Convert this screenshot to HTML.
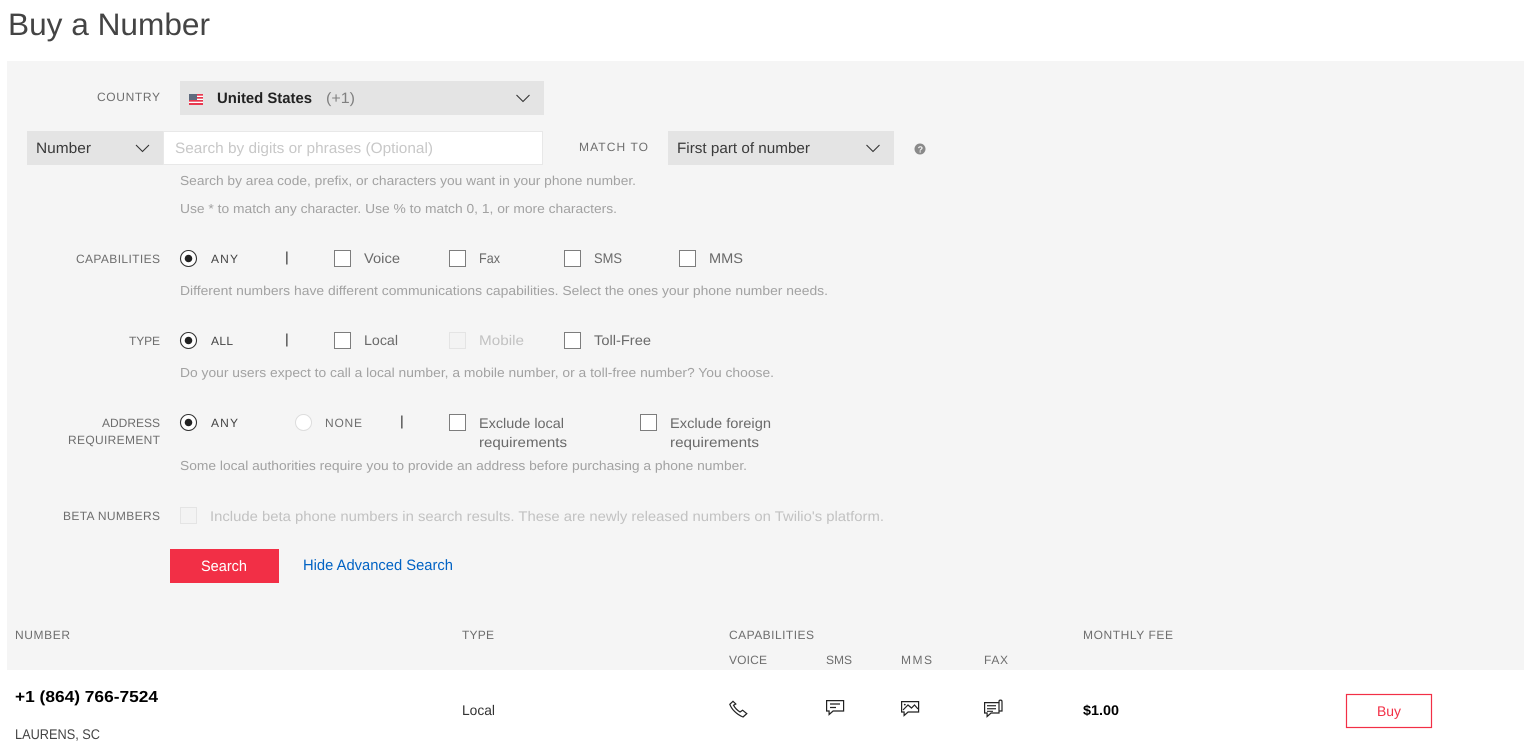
<!DOCTYPE html>
<html lang="en">
<head>
<meta charset="utf-8">
<title>Buy a Number</title>
<style>
html,body{margin:0;padding:0;background:#fff;width:1532px;height:752px;overflow:hidden}
svg{display:block;position:absolute;left:0;top:0}
text{font-family:"Liberation Sans",sans-serif;white-space:pre;text-rendering:geometricPrecision}
.lab{font-size:12px;fill:#6e6e6e}
.opt{font-size:14px;fill:#6a6a6a}
.cap{font-size:12px;fill:#444}
.sel{font-size:15px;fill:#3a3a3a}
.hint{font-size:13px;fill:#a2a2a2}
.dis{font-size:14px;fill:#c2c2c2}
.cb{fill:#fff;stroke:#7d7d7d;stroke-width:1}
.cbd{fill:#f3f3f3;stroke:#e4e4e4;stroke-width:1}
.chev{fill:none;stroke:#333;stroke-width:1.1}
.ic{fill:none;stroke:#222;stroke-width:1.2}
</style>
</head>
<body>
<svg width="1532" height="752" viewBox="0 0 1532 752" xmlns="http://www.w3.org/2000/svg">
<text x="8" y="35" font-size="31" fill="#444" textLength="202" lengthAdjust="spacingAndGlyphs">Buy a Number</text>
<rect x="7" y="61" width="1517" height="609" fill="#f5f5f5"/>

<!-- Country -->
<text class="lab" x="97" y="101" textLength="63" lengthAdjust="spacing">COUNTRY</text>
<rect x="180" y="81" width="364" height="34" fill="#e4e4e4"/>
<g>
<rect x="189" y="94" width="14" height="11" fill="#fff"/>
<rect x="189" y="94" width="14" height="1.700" fill="#e8384f"/>
<rect x="189" y="97" width="14" height="1.700" fill="#e8384f"/>
<rect x="189" y="100" width="14" height="1.700" fill="#e8384f"/>
<rect x="189" y="103" width="14" height="2" fill="#e8384f"/>
<rect x="189" y="94" width="8" height="6" fill="#5f6b7e"/>
</g>
<text x="217" y="103" font-size="15" font-weight="700" fill="#222" textLength="95" lengthAdjust="spacingAndGlyphs">United States</text>
<text x="326" y="103" font-size="15" fill="#808080" textLength="29" lengthAdjust="spacingAndGlyphs">(+1)</text>
<path class="chev" d="M516.500 95l6.500 6.500 6.500-6.500"/>

<!-- Number row -->
<rect x="27" y="131" width="136" height="34" fill="#e4e4e4"/>
<text class="sel" x="36" y="153" textLength="55" lengthAdjust="spacingAndGlyphs">Number</text>
<path class="chev" d="M136 145l6.500 6.500 6.500-6.500"/>
<rect x="163.500" y="131.500" width="379" height="33" fill="#fff" stroke="#e8e8e8"/>
<text x="175" y="153" font-size="15" fill="#c8c8c8" textLength="258" lengthAdjust="spacingAndGlyphs">Search by digits or phrases (Optional)</text>
<text class="lab" x="579" y="151" textLength="69" lengthAdjust="spacing">MATCH TO</text>
<rect x="668" y="131" width="226" height="34" fill="#e4e4e4"/>
<text class="sel" x="677" y="153" textLength="133" lengthAdjust="spacingAndGlyphs">First part of number</text>
<path class="chev" d="M866.500 145l6.500 6.500 6.500-6.500"/>
<circle cx="920" cy="149" r="5.500" fill="#8a8a8a"/>
<text x="917.600" y="152.500" font-size="9" font-weight="700" fill="#f5f5f5">?</text>
<text class="hint" x="180" y="185" textLength="456" lengthAdjust="spacingAndGlyphs">Search by area code, prefix, or characters you want in your phone number.</text>
<text class="hint" x="180" y="213" textLength="437" lengthAdjust="spacingAndGlyphs">Use * to match any character. Use % to match 0, 1, or more characters.</text>

<!-- Capabilities -->
<text class="lab" x="76" y="263" textLength="84" lengthAdjust="spacing">CAPABILITIES</text>
<circle cx="188.500" cy="258.500" r="8" fill="#fff" stroke="#333" stroke-width="1.100"/>
<circle cx="188.500" cy="258.500" r="3.800" fill="#222"/>
<text class="cap" x="211" y="263" textLength="27" lengthAdjust="spacing">ANY</text>
<rect x="286.200" y="251.500" width="1.300" height="13" fill="#444"/>
<rect class="cb" x="334.500" y="250.500" width="16" height="16"/>
<text class="opt" x="364" y="263" textLength="36" lengthAdjust="spacingAndGlyphs">Voice</text>
<rect class="cb" x="449.500" y="250.500" width="16" height="16"/>
<text class="opt" x="479" y="263" textLength="21" lengthAdjust="spacingAndGlyphs">Fax</text>
<rect class="cb" x="564.500" y="250.500" width="16" height="16"/>
<text class="opt" x="594" y="263" textLength="28" lengthAdjust="spacingAndGlyphs">SMS</text>
<rect class="cb" x="679.500" y="250.500" width="16" height="16"/>
<text class="opt" x="709" y="263" textLength="34" lengthAdjust="spacingAndGlyphs">MMS</text>
<text class="hint" x="180" y="295" textLength="648" lengthAdjust="spacingAndGlyphs">Different numbers have different communications capabilities. Select the ones your phone number needs.</text>

<!-- Type -->
<text class="lab" x="129" y="345" textLength="31" lengthAdjust="spacing">TYPE</text>
<circle cx="188.500" cy="340.500" r="8" fill="#fff" stroke="#333" stroke-width="1.100"/>
<circle cx="188.500" cy="340.500" r="3.800" fill="#222"/>
<text class="cap" x="211" y="345" textLength="22" lengthAdjust="spacing">ALL</text>
<rect x="286.200" y="333.500" width="1.300" height="13" fill="#444"/>
<rect class="cb" x="334.500" y="332.500" width="16" height="16"/>
<text class="opt" x="364" y="345" textLength="34" lengthAdjust="spacingAndGlyphs">Local</text>
<rect class="cbd" x="449.500" y="332.500" width="16" height="16"/>
<text class="dis" x="479" y="345" textLength="45" lengthAdjust="spacingAndGlyphs">Mobile</text>
<rect class="cb" x="564.500" y="332.500" width="16" height="16"/>
<text class="opt" x="594" y="345" textLength="57" lengthAdjust="spacingAndGlyphs">Toll-Free</text>
<text class="hint" x="180" y="377" textLength="594" lengthAdjust="spacingAndGlyphs">Do your users expect to call a local number, a mobile number, or a toll-free number? You choose.</text>

<!-- Address -->
<text class="lab" x="102" y="427" textLength="58" lengthAdjust="spacing">ADDRESS</text>
<text class="lab" x="68" y="444" textLength="92" lengthAdjust="spacing">REQUIREMENT</text>
<circle cx="188.500" cy="422.500" r="8" fill="#fff" stroke="#333" stroke-width="1.100"/>
<circle cx="188.500" cy="422.500" r="3.800" fill="#222"/>
<text class="cap" x="211" y="427" textLength="27" lengthAdjust="spacing">ANY</text>
<circle cx="303.500" cy="422.500" r="8" fill="#fff" stroke="#ddd"/>
<text class="lab" x="325" y="427" textLength="37" lengthAdjust="spacing">NONE</text>
<rect x="401.200" y="415.500" width="1.300" height="13" fill="#444"/>
<rect class="cb" x="449.500" y="414.500" width="16" height="16"/>
<text class="opt" x="479" y="428" textLength="85" lengthAdjust="spacingAndGlyphs">Exclude local</text>
<text class="opt" x="479" y="447" textLength="88" lengthAdjust="spacingAndGlyphs">requirements</text>
<rect class="cb" x="640.500" y="414.500" width="16" height="16"/>
<text class="opt" x="670" y="428" textLength="101" lengthAdjust="spacingAndGlyphs">Exclude foreign</text>
<text class="opt" x="670" y="447" textLength="89" lengthAdjust="spacingAndGlyphs">requirements</text>
<text class="hint" x="180" y="470" textLength="567" lengthAdjust="spacingAndGlyphs">Some local authorities require you to provide an address before purchasing a phone number.</text>

<!-- Beta -->
<text class="lab" x="63" y="520" textLength="97" lengthAdjust="spacing">BETA NUMBERS</text>
<rect class="cbd" x="180.500" y="507.500" width="16" height="16"/>
<text class="dis" x="210" y="521" textLength="674" lengthAdjust="spacingAndGlyphs">Include beta phone numbers in search results. These are newly released numbers on Twilio's platform.</text>

<!-- Actions -->
<rect x="170" y="549" width="109" height="34" fill="#f22f46"/>
<text x="201" y="571" font-size="15" fill="#fff" textLength="46" lengthAdjust="spacingAndGlyphs">Search</text>
<text x="303" y="570" font-size="15" fill="#0263c4" textLength="150" lengthAdjust="spacingAndGlyphs">Hide Advanced Search</text>

<!-- Table head -->
<text class="lab" x="15" y="639" textLength="55" lengthAdjust="spacing">NUMBER</text>
<text class="lab" x="462" y="639" textLength="32" lengthAdjust="spacing">TYPE</text>
<text class="lab" x="729" y="639" textLength="85" lengthAdjust="spacing">CAPABILITIES</text>
<text class="lab" x="1083" y="639" textLength="90" lengthAdjust="spacing">MONTHLY FEE</text>
<text class="lab" x="729" y="664" textLength="38" lengthAdjust="spacing">VOICE</text>
<text class="lab" x="826" y="664" textLength="26" lengthAdjust="spacing">SMS</text>
<text class="lab" x="901" y="664" textLength="31" lengthAdjust="spacing">MMS</text>
<text class="lab" x="984" y="664" textLength="24" lengthAdjust="spacing">FAX</text>

<!-- Row -->
<text x="15" y="702" font-size="16" font-weight="700" fill="#000" textLength="143" lengthAdjust="spacingAndGlyphs">+1 (864) 766-7524</text>
<text x="15" y="739" font-size="14" fill="#444" textLength="85" lengthAdjust="spacingAndGlyphs">LAURENS, SC</text>
<text x="462" y="715" font-size="14" fill="#333" textLength="33" lengthAdjust="spacingAndGlyphs">Local</text>
<text x="1083" y="715" font-size="14" font-weight="700" fill="#000" textLength="36" lengthAdjust="spacingAndGlyphs">$1.00</text>

<!-- phone -->
<path class="ic" d="M733 701.300L729.800 704.300C731.500 709 736.500 714.500 743 717L746.800 713.600L742.600 710.200L740 712C737.500 710.500 735 708 733.500 705.200L735.800 704z"/>
<!-- sms -->
<path class="ic" d="M826.600 700.600h17v10.400h-10.500l-4 3.500v-3.500h-2.500z"/>
<path class="ic" d="M830 704h10M830 707.500h6"/>
<!-- mms -->
<path class="ic" d="M901.600 701.600h17v10.400h-10.500l-4 3.500v-3.500h-2.500z"/>
<path class="ic" d="M903 710l5-5 3.500 3 3-3 3.500 4"/>
<circle cx="904.800" cy="704.600" r=".9" fill="#222"/>
<!-- fax -->
<path class="ic" d="M999 702.600h-14.400v10.400h2.500v3.500l4-3.500h7.900z"/>
<path class="ic" d="M999 702.600v-1c0-2 3-2 3 0v9.400h-3"/>
<path d="M987 705h9v1.400h-9zM987 708h9v1.400h-9zM987 710.700h6v1.300h-6z" fill="#444"/>

<!-- Buy -->
<rect x="1346.500" y="694.500" width="85" height="33" fill="#fff" stroke="#f22f46" stroke-width="1.200"/>
<text x="1377" y="716" font-size="14" fill="#f22f46" textLength="24" lengthAdjust="spacingAndGlyphs">Buy</text>
</svg>
</body>
</html>
